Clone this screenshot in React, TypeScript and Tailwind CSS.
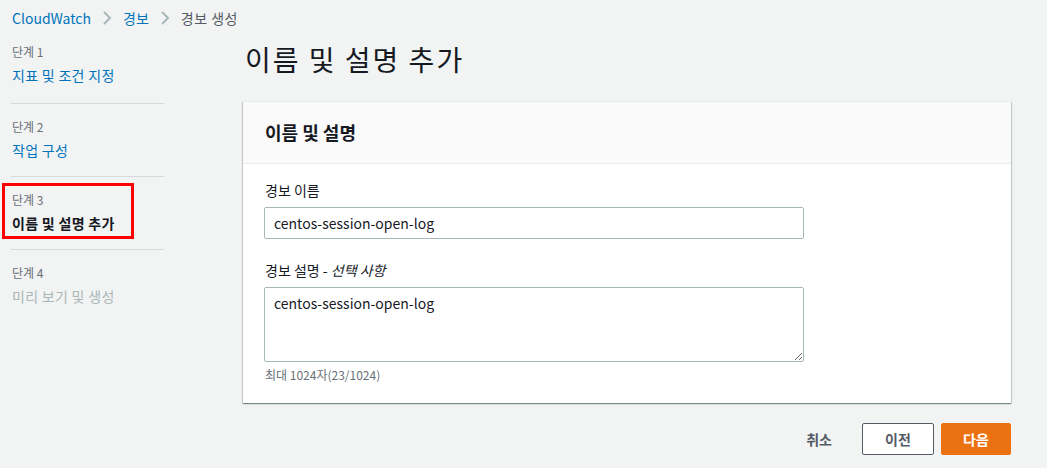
import React from 'react';

const steps = [
    { label: '단계 1', name: '지표 및 조건 지정', state: 'link' },
    { label: '단계 2', name: '작업 구성', state: 'link' },
    { label: '단계 3', name: '이름 및 설명 추가', state: 'active' },
    { label: '단계 4', name: '미리 보기 및 생성', state: 'disabled' },
];

const Chevron = () => (
    <svg width="10" height="16" viewBox="0 0 10 16" className="mx-[11px]">
        <polyline points="2,2 8,8 2,14" fill="none" stroke="#aab7b8" strokeWidth="2" />
    </svg>
);

export default function App() {
    return (
        <div className="w-[1047px] h-[468px] bg-[#f2f3f3] font-['Noto_Sans_CJK_KR',sans-serif] text-[#16191f] overflow-hidden">
            {/* BREADCRUMB */}
            <div className="h-9 flex items-center pl-3 text-[14px]">
                <span className="text-[#0073bb]">CloudWatch</span>
                <Chevron />
                <span className="text-[#0073bb]">경보</span>
                <Chevron />
                <span className="text-[#545b64] tracking-[0.5px]">경보 생성</span>
            </div>

            <div className="flex">
                {/* STEPS */}
                <div className="w-[153px] ml-[11px] mt-2">
                    {steps.map((s, i) => (
                        <div
                            key={s.label}
                            className={`relative ${i > 0 ? 'pt-[15px]' : ''} ${i === 0 ? 'pb-[18px]' : 'pb-4'} ${
                                i < steps.length - 1 ? 'border-b border-[#d5dbdb]' : ''
                            }`}
                        >
                            <div className="text-[12px] leading-4 text-[#687078] pl-px">{s.label}</div>
                            <div
                                className={`mt-[5px] text-[14px] leading-5 pl-px tracking-[0.3px] ${
                                    s.state === 'link'
                                        ? 'text-[#0073bb]'
                                        : s.state === 'active'
                                        ? 'text-[#16191f] font-bold'
                                        : 'text-[#aab7b8]'
                                }`}
                            >
                                {s.name}
                            </div>
                            {s.state === 'active' && (
                                <div className="absolute left-[-9px] top-[6px] w-[132px] h-[56px] border-[3px] border-[#ff0000]" />
                            )}
                        </div>
                    ))}
                </div>

                {/* MAIN */}
                <div className="ml-[79px] w-[768px] mt-[5px]">
                    <h1 className="text-[28px] leading-9 font-normal pl-[2px] tracking-[2px]">이름 및 설명 추가</h1>

                    <div className="mt-[24px] bg-white shadow-[0_1px_1px_0_rgba(0,28,36,0.3),1px_1px_1px_0_rgba(0,28,36,0.15),-1px_1px_1px_0_rgba(0,28,36,0.15)] border-t border-[#eaeded]">
                        <div className="h-[62px] bg-[#fafafa] border-b border-[#eaeded] flex items-center px-[22px]">
                            <h2 className="text-[18px] font-bold">이름 및 설명</h2>
                        </div>

                        <div className="px-[21px] pt-4 pb-5">
                            <label className="block text-[14px] leading-5 pl-px">경보 이름</label>
                            <input
                                type="text"
                                readOnly
                                value="centos-session-open-log"
                                className="mt-[7px] w-[540px] h-8 border border-[#aab7b8] rounded-[2px] px-[9px] text-[14px] text-[#16191f] outline-none bg-white"
                            />

                            <label className="block mt-[21px] text-[14px] leading-5 pl-px">
                                경보 설명 - <i>선택 사항</i>
                            </label>
                            <textarea
                                readOnly
                                value="centos-session-open-log"
                                className="block mt-[7px] w-[540px] h-[75px] border border-[#aab7b8] rounded-[2px] px-[9px] py-[5px] text-[14px] text-[#16191f] outline-none bg-white"
                            ></textarea>
                            <div className="mt-[5px] text-[12px] leading-4 text-[#687078] pl-px">최대 1024자(23/1024)</div>
                        </div>
                    </div>

                    {/* ACTIONS */}
                    <div className="mt-5 flex justify-end items-center gap-[7px]">
                        <button className="h-8 px-5 text-[14px] font-bold text-[#545b64]">취소</button>
                        <button className="ml-[3px] h-8 w-[72px] border border-[#545b64] rounded-[2px] bg-white text-[14px] font-bold text-[#545b64]">
                            이전
                        </button>
                        <button className="h-8 w-[70px] border border-[#ec7211] rounded-[2px] bg-[#ec7211] text-[14px] font-bold text-white">
                            다음
                        </button>
                    </div>
                </div>
            </div>
        </div>
    );
}
